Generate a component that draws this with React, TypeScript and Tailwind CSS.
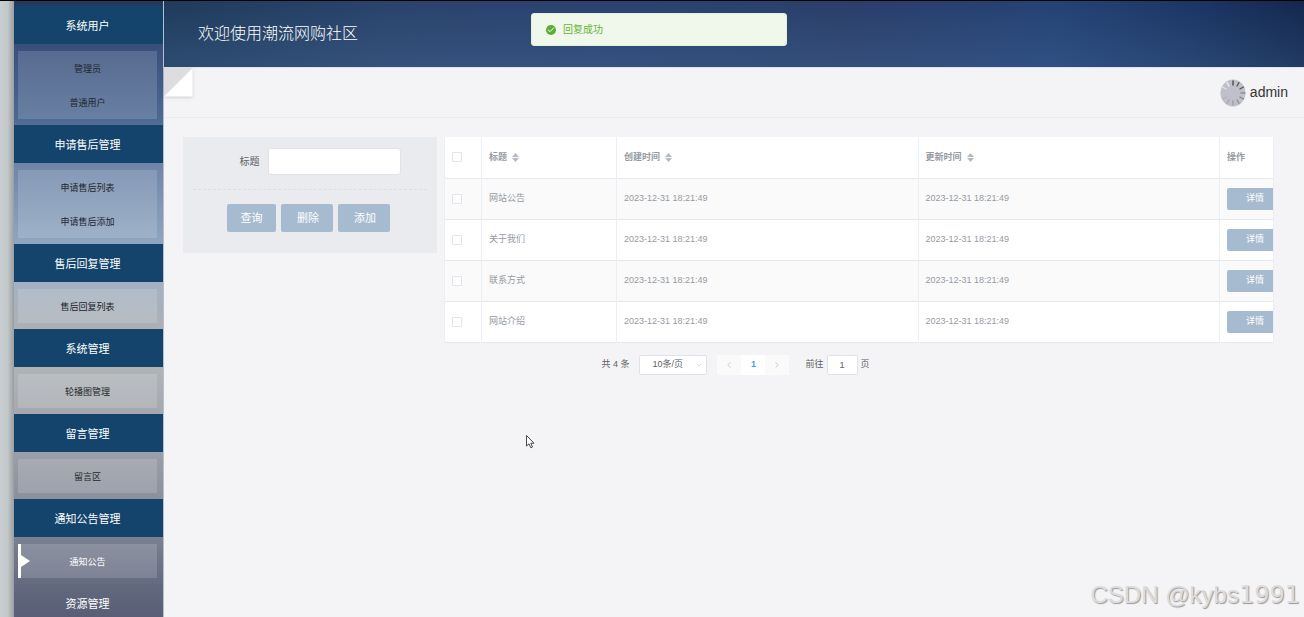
import { Check, ChevronDown, ChevronLeft, ChevronRight } from "lucide-react";

const menu = [
  { title: "系统用户", items: ["管理员", "普通用户"] },
  { title: "申请售后管理", items: ["申请售后列表", "申请售后添加"] },
  { title: "售后回复管理", items: ["售后回复列表"] },
  { title: "系统管理", items: ["轮播图管理"] },
  { title: "留言管理", items: ["留言区"] },
  { title: "通知公告管理", items: ["通知公告"] },
];

const rows = ["网站公告", "关于我们", "联系方式", "网站介绍"];
const time = "2023-12-31 18:21:49";

function Sidebar() {
  return (
    <nav className="w-[150px] shrink-0 overflow-hidden border-r border-[#b4c0d0] bg-[linear-gradient(180deg,#22375b_0%,#3b517e_8%,#4d6992_19%,#7087aa_27%,#8ea5bf_39%,#a3b2c2_46%,#abb0b5_53%,#b0b3b6_60%,#a5a8ae_67%,#999ea8_74%,#8a8f9b_81%,#777e8f_88%,#666d82_94%,#595f76_100%)] pt-[5px] text-center">
      {menu.map((group) => (
        <div key={group.title}>
          <h2 className="h-[38px] bg-[#14446c] pr-0.5 text-[11px] leading-[40px] text-white">{group.title}</h2>
          <ul className="mt-[7px] mr-1.5 mb-1.5 ml-1 bg-white/15">
            {group.items.map((item) => (
              <li key={item} className="relative">
                {item === "通知公告" && (
                  <span className="absolute inset-y-0 left-0 flex items-center border-l-3 border-white">
                    <svg width="9" height="12" viewBox="0 0 9 12">
                      <path d="M0 0L9 6L0 12Z" fill="#fff" />
                    </svg>
                  </span>
                )}
                <a
                  href="#"
                  className={
                    item === "通知公告"
                      ? "block h-[34px] text-[9px] leading-[36px] text-white"
                      : "block h-[34px] text-[9px] leading-[36px] text-[#22262c]"
                  }
                >
                  {item}
                </a>
              </li>
            ))}
          </ul>
        </div>
      ))}
      <h2 className="h-[38px] bg-[#595f76]/20 pr-0.5 text-[11px] leading-[40px] text-white">资源管理</h2>
    </nav>
  );
}

function Spinner() {
  const shades = ["#3f4046", "#55565c", "#55565c", "#85868d", "#85868d", "#92939a", "#9b9ca4", "#a5a6ae", "#b0b1b9", "#bfc0c9", "#e2e3e8", "#eeeef2"];
  return (
    <svg width="26" height="28" viewBox="0 0 26 28">
      <ellipse cx="13" cy="14" rx="12.5" ry="13.5" fill="#bfc0c9" />
      {shades.map((shade, i) => (
        <path key={i} d="M13 1.5V6.5" stroke={shade} strokeWidth="1.3" transform={`rotate(${i * 30} 13 14)`} />
      ))}
    </svg>
  );
}

function SortIcon() {
  return (
    <svg width="7" height="9" viewBox="0 0 7 9" fill="#b4b8c0">
      <path d="M0 4L3.5 0L7 4Z" />
      <path d="M0 5L3.5 9L7 5Z" />
    </svg>
  );
}

function Tick({ label }: { label: string }) {
  return (
    <input
      type="checkbox"
      aria-label={label}
      className="block size-2.5 appearance-none rounded-[1px] border border-[#e1e4ea] bg-white"
    />
  );
}

function SearchPanel() {
  return (
    <form className="h-[116px] w-[254px] shrink-0 bg-[#e9ebee] px-2.5 pt-[11px]">
      <div className="flex items-center justify-center gap-2 pb-3.5 pl-5">
        <label htmlFor="title" className="text-[10px] text-[#606266]">
          标题
        </label>
        <input id="title" className="h-[27px] w-[133px] rounded-[3px] border border-[#e0e3e9] bg-white px-2 text-[10px]" />
      </div>
      <div className="flex justify-center gap-[5px] border-t border-dashed border-[#dcdedf] pt-3.5 pr-[3px] text-[11px] text-white">
        <button type="button" className="h-7 w-[49px] rounded-xs bg-[#a6bbd0]">
          查询
        </button>
        <button type="button" className="h-7 w-[52px] rounded-xs bg-[#a6bbd0] pl-0.5">
          删除
        </button>
        <button type="button" className="h-7 w-[52px] rounded-xs bg-[#a6bbd0] pl-0.5">
          添加
        </button>
      </div>
    </form>
  );
}

function NoticeTable() {
  return (
    <div className="min-w-0 flex-1">
      <table className="w-full table-fixed border-collapse bg-white text-left text-[9px] text-[#969aa3]">
        <colgroup>
          <col className="w-[37px]" />
          <col className="w-[135px]" />
          <col />
          <col />
          <col className="w-[54px]" />
        </colgroup>
        <thead>
          <tr className="h-[41px] border-b border-[#e8e9ee]">
            <th className="border-x border-[#ebeef5] pl-[7px]">
              <Tick label="全选" />
            </th>
            {["标题", "创建时间", "更新时间"].map((name) => (
              <th key={name} className="border-r border-[#ebeef5] pl-[7px] font-bold">
                <span className="flex items-center gap-[5px]">
                  {name}
                  <SortIcon />
                </span>
              </th>
            ))}
            <th className="border-r border-[#ebeef5] pl-[7px] font-bold">操作</th>
          </tr>
        </thead>
        <tbody>
          {rows.map((name) => (
            <tr key={name} className="h-[41px] border-b border-[#e6e7eb] odd:bg-[#fafafa]">
              <td className="border-x border-[#ebeef5] pl-[7px]">
                <Tick label={name} />
              </td>
              <td className="border-r border-[#ebeef5] pl-[7px]">{name}</td>
              <td className="border-r border-[#ebeef5] pl-[7px]">{time}</td>
              <td className="border-r border-[#ebeef5] pl-[7px]">{time}</td>
              <td className="overflow-hidden border-r border-[#ebeef5] pl-[7px]">
                <button type="button" className="block h-[22px] w-14 rounded-xs bg-[#a6bbd0] text-[9px] text-white">
                  详情
                </button>
              </td>
            </tr>
          ))}
        </tbody>
      </table>
    </div>
  );
}

function Pagination() {
  return (
    <div className="mt-3 flex items-center justify-center text-[9px] text-[#606266]">
      <span>共 4 条</span>
      <div className="relative ml-2.5">
        <select aria-label="每页条数" className="h-5 w-[68px] appearance-none rounded-xs border border-[#dfe2e8] bg-white pl-3 text-[9px]">
          <option>10条/页</option>
        </select>
        <ChevronDown className="absolute top-1.5 right-1 size-2 text-[#c0c4cc]" />
      </div>
      <div className="ml-2.5 flex rounded-xs">
        <button type="button" aria-label="上一页" className="flex h-5 w-6 items-center justify-center bg-[#fafafb] text-[#c0c4cc]">
          <ChevronLeft className="size-2.5" />
        </button>
        <button type="button" className="h-5 w-6 bg-white font-bold text-[#409eff]">
          1
        </button>
        <button type="button" aria-label="下一页" className="flex h-5 w-6 items-center justify-center bg-[#fafafb] text-[#c0c4cc]">
          <ChevronRight className="size-2.5" />
        </button>
      </div>
      <label className="ml-4 flex items-center gap-[3px]">
        前往
        <input defaultValue="1" className="h-5 w-[31px] rounded-xs border border-[#dfe2e8] bg-white text-center text-[9px]" />
        页
      </label>
    </div>
  );
}

export default function App() {
  return (
    <div className="flex h-screen overflow-hidden border-t border-black bg-[#f4f4f6] font-['Liberation_Sans','Noto_Sans_CJK_SC',sans-serif]">
      <div className="w-3.5 shrink-0 bg-[linear-gradient(90deg,#c8ced1_0%,#c2c7ca_55%,#9a9ea1_100%)]" />
      <div className="relative flex min-w-0 flex-1">
        <Sidebar />
        <main className="min-w-0 flex-1">
          <header className="h-[67px] border-b border-[#dfe2f1] bg-[linear-gradient(180deg,#ffffff00,#5f86b938),linear-gradient(100deg,#1e3b5b_0%,#29436b_20%,#2b4270_38%,#28416c_50%,#2a3e69_60%,#234274_78%,#1a3562_90%,#12264b_100%)] pl-[34px]">
            <h1 className="text-[16px] leading-[65px] font-light text-white">欢迎使用潮流网购社区</h1>
          </header>
          <div className="flex h-[50px] justify-between border-b border-[#ececef]">
            <svg width="36" height="36" viewBox="0 0 36 36" className="drop-shadow">
              <path d="M0 0H28.500L0 28.500Z" fill="#dddde0" />
              <path d="M28.500 0V28.500H0Z" fill="#fff" />
            </svg>
            <div className="flex items-center gap-1 pr-4 text-[14px] text-[#333]">
              <Spinner />
              admin
            </div>
          </div>
          <section className="pt-[19px] pr-4 pl-[19px]">
            <div className="mr-3.5 flex items-start gap-[7px]">
              <SearchPanel />
              <NoticeTable />
            </div>
            <Pagination />
          </section>
        </main>

        <div
          role="alert"
          className="absolute top-3 left-1/2 flex h-[33px] w-64 -translate-x-1/2 items-center gap-[7px] rounded-[3px] border border-[#e1f3d8] bg-[#eff8ea] pl-3.5 text-[10px] text-[#67b436]"
        >
          <span className="flex size-2.5 items-center justify-center rounded-full bg-[#5daf34]">
            <Check className="size-2 text-white" strokeWidth={3} />
          </span>
          回复成功
        </div>

        <svg className="absolute top-[434px] left-[512px]" width="9" height="14" viewBox="0 0 9 14">
          <path d="M0.500 0.500V11L3 8.800L4.800 12.800L6.500 12L4.800 8.200H8Z" fill="#fff" stroke="#333" strokeWidth="0.900" />
        </svg>

        <p className="absolute right-1 bottom-1 text-[24px] text-[#dcdcde] [text-shadow:1px_1px_1px_#999]">
          CSDN @kybs<span className="font-['DejaVu_Sans',sans-serif]">1991</span>
        </p>
      </div>
    </div>
  );
}
